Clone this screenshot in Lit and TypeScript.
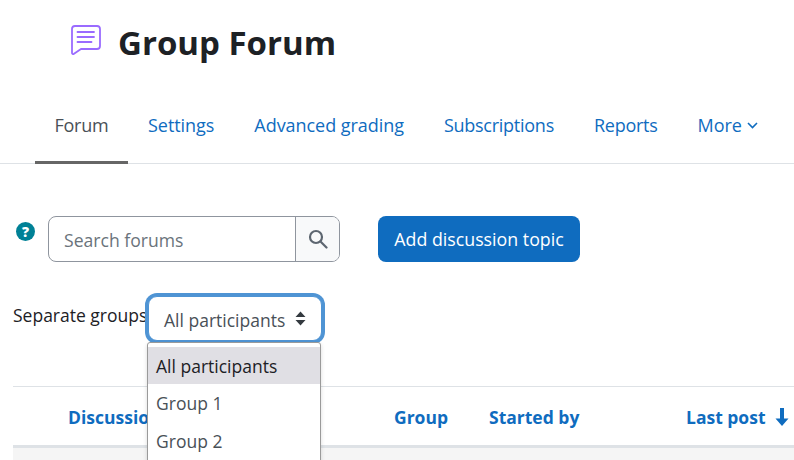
import { LitElement, html, css } from "lit";
import { customElement } from "lit/decorators.js";

@customElement("app-root")
export class AppRoot extends LitElement {
  static styles = css`
    :host { display: block; width: 794px; height: 460px; overflow: hidden; background: #fff; position: relative;
      font-family: "Open Sans", "Noto Sans", sans-serif; color: #1d2125; }
    * { box-sizing: border-box; }
    .head { display: flex; align-items: center; height: 86px; padding-left: 70px; gap: 16px; }
    .head svg { display: block; margin-top: -9px; }
    h1 { margin: 0; font-size: 33px; font-weight: 700; line-height: 40px; margin-top: -1px; color: #1d2125; }
    nav { display: flex; height: 78px; border-bottom: 1px solid #dee2e6; padding-left: 35px; }
    nav a { display: flex; align-items: center; height: 78px; padding: 0 20px; color: #0f6cbf; font-size: 18px; letter-spacing: -0.05px; white-space: nowrap; }
    nav a.on { color: #495057; border-bottom: 3px solid #666; padding: 2px 20px 0; width: 93px; justify-content: center; letter-spacing: -0.2px; }
    nav a.tight { letter-spacing: -0.26px; }
    nav a svg { margin-left: 5px; margin-top: 1px; }
    .tools { display: flex; align-items: flex-start; padding: 52px 0 0 16px; }
    .help { width: 19px; height: 19px; border-radius: 50%; background: #008196; color: #fff; font-size: 14px; font-weight: 800; display: flex; align-items: center; justify-content: center; margin-top: 6px; }
    .search { display: flex; width: 292px; height: 46px; margin-left: 13px; border: 1px solid #8f959e; border-radius: 8px; overflow: hidden; }
    .search .ph { flex: 1; padding: 2px 15px 0; display: flex; align-items: center; font-size: 17.600px; color: #6a737b; }
    .search .btn { width: 44px; background: #f8f9fa; border-left: 1px solid #8f959e; display: flex; align-items: center; justify-content: center; }
    .add { margin-left: 38px; width: 202px; height: 46px; background: #0f6cbf; color: #fff; border-radius: 8px; display: flex; align-items: center; justify-content: center; font-size: 17.800px; }
    .groups { display: flex; align-items: center; padding: 33px 0 0 13px; height: 80px; position: relative; }
    .groups .lbl { font-size: 17.500px; width: 135px; white-space: nowrap; margin-top: -8px; }
    .select { width: 174px; height: 45px; border: 1px solid #4f94d4; border-radius: 9px; box-shadow: 0 0 0 3px #4f94d4; display: flex; align-items: center; padding: 3px 0 0 15px; color: #495057; font-size: 17.500px; justify-content: space-between; background: #fff; white-space: nowrap; }
    .select svg { margin: -3px 15px 0 0; }
    .table { margin: 44px 0 0 13px; }
    .row { height: 62px; border-top: 1px solid #dee2e6; border-bottom: 3px solid #dee2e6; display: grid; grid-template-columns: 55px 326px 95px 197px 1fr; align-items: center; color: #0f6cbf; font-weight: 700; font-size: 17.500px; white-space: nowrap; }
    .row span { padding-top: 1px; }
    .row span.lp { display: flex; align-items: center; gap: 9px; }
    .rest { height: 30px; background: #f5f5f5; }
    .menu { position: absolute; left: 147px; top: 342px; width: 174px; height: 130px; background: #fff; border: 1px solid #9a9a9a; border-radius: 3px; padding-top: 4px; box-shadow: 0 2px 4px rgba(0,0,0,.15); }
    .menu div { height: 38px; padding: 0 0 0 8px; display: flex; align-items: center; font-size: 17.500px; color: #495057; }
    .menu div.sel { background: #e0dfe4; color: #1d2125; height: 37px; }
    .menu div.last { height: 37px; }
  `;

  render() {
    return html`
      <div class="head">
        <svg width="32" height="33" viewBox="0 0 32 33" fill="none" stroke="#9a6bff" stroke-width="1.800" stroke-linecap="round" stroke-linejoin="round">
          <path d="M5 4h22a3 3 0 0 1 3 3v17a3 3 0 0 1-3 3H11l-7 4.800a1.200 1.200 0 0 1-2-1V7a3 3 0 0 1 3-3z"/>
          <path d="M7.500 10h16.500M7.500 15h16.500M7.500 20h14"/>
        </svg>
        <h1>Group Forum</h1>
      </div>
      <nav>
        <a class="on">Forum</a><a>Settings</a><a>Advanced grading</a><a class="tight">Subscriptions</a><a class="tight">Reports</a>
        <a>More<svg width="11" height="7" viewBox="0 0 11 7" fill="none" stroke="#0f6cbf" stroke-width="1.600"><path d="M1 1l4.500 4.500L10 1"/></svg></a>
      </nav>
      <div class="tools">
        <div class="help">?</div>
        <div class="search">
          <div class="ph">Search forums</div>
          <div class="btn">
            <svg width="20" height="20" viewBox="0 0 20 20" fill="none" stroke="#5d6670" stroke-width="2.200"><circle cx="8" cy="8" r="6"/><path d="M12.500 12.500l6 6" stroke-linecap="round"/></svg>
          </div>
        </div>
        <div class="add">Add discussion topic</div>
      </div>
      <div class="groups">
        <span class="lbl">Separate groups</span>
        <div class="select">All participants
          <svg width="11" height="15" viewBox="0 0 11 15" fill="#343a40"><path d="M5.500 0.500L10.500 6H.5zM5.500 14.500L.5 9h10z"/></svg>
        </div>
      </div>
      <div class="table">
        <div class="row">
          <span></span><span>Discussion</span><span>Group</span><span>Started by</span>
          <span class="lp">Last post
            <svg width="14" height="18" viewBox="0 0 14 18" fill="#0f6cbf"><path d="M5 0h4v10.500h4.500L7 18 .5 10.500H5z"/></svg>
          </span>
        </div>
        <div class="rest"></div>
      </div>
      <div class="menu">
        <div class="sel">All participants</div><div>Group 1</div><div class="last">Group 2</div>
      </div>
    `;
  }
}
